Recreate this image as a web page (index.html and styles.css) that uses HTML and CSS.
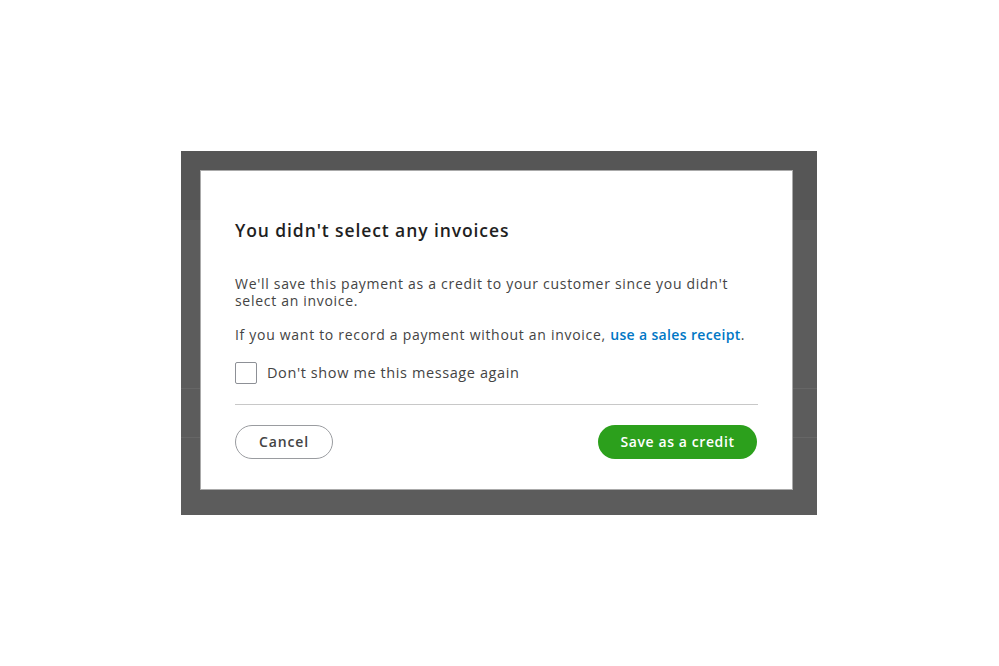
FILE: index.html
```html
<!DOCTYPE html>
<html lang="en">
<head>
    <meta charset="UTF-8">
    <meta name="viewport" content="width=device-width, initial-scale=1.0">
    <title>Receive Payment</title>
    <link rel="stylesheet" href="styles.css">
</head>
<body>
    <div class="overlay">
        <div class="modal">
            <h2 class="modal-title">You didn't select any invoices</h2>
            <p class="modal-text">We'll save this payment as a credit to your customer since you didn't select an invoice.</p>
            <p class="modal-text">If you want to record a payment without an invoice, <a class="link" href="#">use a sales receipt</a>.</p>
            <label class="check-row">
                <span class="checkbox"></span>
                <span class="check-label">Don't show me this message again</span>
            </label>
            <div class="divider"></div>
            <div class="actions">
                <button class="btn btn-cancel">Cancel</button>
                <button class="btn btn-save">Save as a credit</button>
            </div>
        </div>
    </div>
</body>
</html>
```

FILE: styles.css
```css
body {
    margin: 0;
    background-color: #fff;
    font-family: "Open Sans", Lato, sans-serif;
    color: #393a3d;
}

.overlay {
    margin: 151px 0 0 181px;
    width: 636px;
    height: 364px;
    box-sizing: border-box;
    padding: 19px 0 0 19px;
    background:
        linear-gradient(#666, #666) 0 237px / 100% 1px no-repeat,
        linear-gradient(#666, #666) 0 286px / 100% 1px no-repeat,
        linear-gradient(#565656 0, #565656 69px, #5c5c5c 69px);
}

.modal {
    width: 593px;
    height: 320px;
    box-sizing: border-box;
    padding: 47px 34px 0 34px;
    background-color: #fff;
    border: 1px solid #aaa;
    display: flex;
    flex-direction: column;
}

.modal-title {
    margin: 0;
    font-size: 17.5px;
    line-height: 24px;
    font-weight: 600;
    color: #1f1f1f;
    letter-spacing: 0.9px;
}

.modal-text {
    margin: 0;
    font-size: 14px;
    line-height: 16.5px;
    color: #444;
    letter-spacing: 0.7px;
}

.modal-title + .modal-text {
    margin-top: 34px;
}

.modal-text + .modal-text {
    margin-top: 18px;
}

.link {
    color: #0077c5;
    font-weight: 600;
    letter-spacing: 0.35px;
    text-decoration: none;
}

.check-row {
    display: flex;
    align-items: center;
    gap: 10px;
    margin-top: 18px;
}

.checkbox {
    width: 20px;
    height: 20px;
    border: 1px solid #8d9096;
    border-radius: 2px;
}

.check-label {
    font-size: 14.5px;
    color: #444;
    letter-spacing: 0.6px;
}

.divider {
    height: 1px;
    background-color: #c8c8c8;
    margin-top: 20px;
}

.actions {
    display: flex;
    justify-content: space-between;
    margin-top: 20px;
}

.btn {
    height: 34px;
    border-radius: 17px;
    font-family: "Open Sans", Lato, sans-serif;
    font-size: 14px;
    font-weight: 600;
    cursor: pointer;
}

.btn-cancel {
    width: 98px;
    background-color: #fff;
    border: 1px solid #9a9ca0;
    color: #444;
    letter-spacing: 0.9px;
}

.btn-save {
    width: 159px;
    margin-right: 1px;
    background-color: #2ca01c;
    border: none;
    color: #fff;
    letter-spacing: 0.6px;
}
```
